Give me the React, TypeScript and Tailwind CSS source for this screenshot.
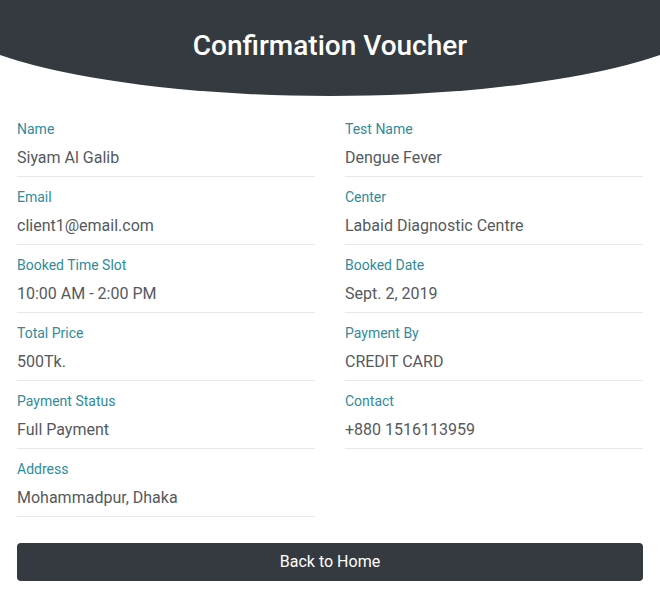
const left = [
	{ label: "Name", value: "Siyam Al Galib" },
	{ label: "Email", value: "client1@email.com" },
	{ label: "Booked Time Slot", value: "10:00 AM - 2:00 PM" },
	{ label: "Total Price", value: "500Tk." },
	{ label: "Payment Status", value: "Full Payment" },
	{ label: "Address", value: "Mohammadpur, Dhaka" },
];

const right = [
	{ label: "Test Name", value: "Dengue Fever" },
	{ label: "Center", value: "Labaid Diagnostic Centre" },
	{ label: "Booked Date", value: "Sept. 2, 2019" },
	{ label: "Payment By", value: "CREDIT CARD" },
	{ label: "Contact", value: "+880 1516113959" },
];

function Field(props: { label: string; value: string }) {
	return (
		<div className="flex flex-col pt-[10px] pb-[6px] border-b border-[#e6e8ea]">
			<span className="text-[14px] leading-[20px] text-[#2f8c9c]">
				{props.label}
			</span>
			<span className="mt-[7px] text-[16px] leading-[24px] text-[#55595e]">
				{props.value}
			</span>
		</div>
	);
}

export default function App() {
	return (
		<div className="w-[660px] h-[594px] bg-white font-['Roboto',sans-serif] flex flex-col">
			<div className="h-[96px] bg-[#343a40] [clip-path:ellipse(61%_96px_at_50%_0)] flex justify-center pt-[27px]">
				<h1 className="text-white text-[28px] leading-[38px] font-medium">
					Confirmation Voucher
				</h1>
			</div>
			<div className="px-[17px] pt-[13px] grid grid-cols-2 gap-x-[30px]">
				<div className="flex flex-col">
					{left.map((f) => (
						<Field key={f.label} label={f.label} value={f.value} />
					))}
				</div>
				<div className="flex flex-col">
					{right.map((f) => (
						<Field key={f.label} label={f.label} value={f.value} />
					))}
				</div>
			</div>
			<div className="px-[17px] pt-[26px]">
				<button className="w-full h-[38px] rounded-[4px] bg-[#343a40] text-white text-[16px] leading-[24px]">
					Back to Home
				</button>
			</div>
		</div>
	);
}
